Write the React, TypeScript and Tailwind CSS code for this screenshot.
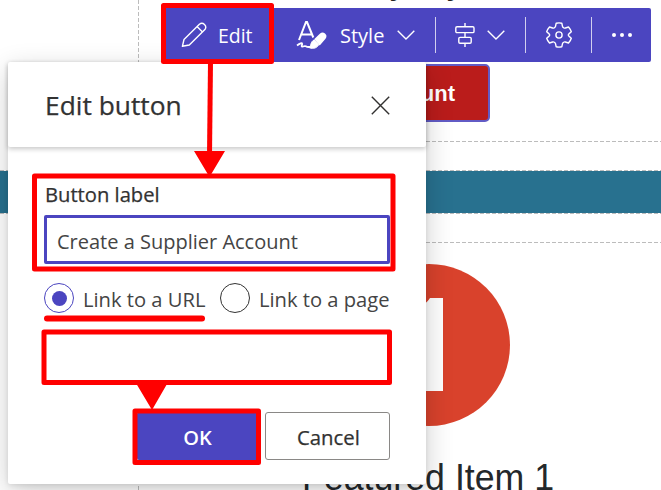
import React from "react";

const ui = "font-['Open_Sans','Noto_Sans',sans-serif]";

function Label({ children, width, className = "" }: { children: string; width: number; className?: string }) {
  const ref = React.useRef<HTMLSpanElement>(null);
  const [scale, setScale] = React.useState(1);
  React.useLayoutEffect(() => {
    if (ref.current) setScale(width / ref.current.offsetWidth);
  }, [width]);
  return (
    <span className="block shrink-0 whitespace-nowrap" style={{ width }}>
      <span ref={ref} className={`inline-block origin-left ${className}`} style={{ transform: `scaleX(${scale})` }}>
        {children}
      </span>
    </span>
  );
}

function Chevron() {
  return (
    <svg className="h-3 w-[18px] shrink-0" viewBox="0 0 18 12" fill="none" stroke="white" strokeWidth="1.4">
      <path d="M.7 1.7 9 9.9l8.3-8.2" />
    </svg>
  );
}

function Toolbar() {
  return (
    <div className={`absolute left-[163px] top-2 flex h-[54px] w-[488px] items-center rounded-[2px] bg-[#4b45c0] text-white ${ui}`}>
      <svg className="ml-[18px] h-[26px] w-[26px] shrink-0" viewBox="0 0 26 26" fill="none" stroke="white" strokeWidth="1.4" strokeLinejoin="round">
        <path d="M1.4 24.3 3 17.5 18.4 2.2a3.9 3.9 0 0 1 5.5 5.4L8.3 23Z M16 4.6l5.5 5.5" />
      </svg>
      <div className="ml-[11px] mt-[2px]"><Label width={35} className="text-[20px] leading-7">Edit</Label></div>
      <svg className="ml-[43px] h-[30px] w-8 shrink-0" viewBox="0 0 32 30" fill="none" stroke="white">
        <path d="M3 20 10 2h1l6.3 15.5M5.8 14.5h10.4" strokeWidth="2" />
        <path d="M1 25.5c3-2.300 5-3 5.200-1.800.2 1-1.500 3 .2 3s2-1.200 3.400-.4 1.800 1 4.500.6" strokeWidth="1.8" />
        <path d="m19.2 19.4 5.4-5.2c2.4-2.2 6.6.8 4.3 4l-5.2 6Z" fill="white" strokeWidth="1.6" />
        <path d="m18 20 4.8 4.600c-1.500 3.300-5.400 4.600-9.400 3.200 1.800-2.400 1-6 4.600-7.800Z" fill="white" strokeWidth="1" />
      </svg>
      <div className="ml-[12px] mt-[2px]"><Label width={44} className="text-[20px] leading-7">Style</Label></div>
      <div className="ml-[13px] flex"><Chevron /></div>
      <i className="ml-5 h-9 w-px shrink-0 bg-[#d1cfef]" />
      <svg className="ml-[19px] h-6 w-5 shrink-0" viewBox="0 0 20 24" fill="none" stroke="white" strokeWidth="1.4">
        <rect x=".8" y="3.8" width="18.2" height="5.8" rx="1.2" />
        <rect x="3.8" y="14.4" width="12.4" height="5.8" rx="1.2" />
        <path d="M10 0v3.8M10 9.6v4.8M10 20.2V24" />
      </svg>
      <div className="ml-3 flex"><Chevron /></div>
      <i className="ml-5 h-9 w-px shrink-0 bg-[#d1cfef]" />
      <svg className="ml-5 h-[26px] w-[26px] shrink-0" viewBox="0 0 26 26" fill="none" stroke="white" strokeWidth="1.4" strokeLinejoin="round">
        <path d="M10.2 1.2q2.8-.6 5.6 0l.7 3.2q.2 1 1.1 1.3.8.6 1.8.3l3.1-1q2 2.2 2.8 4.8l-2.4 2.1q-1.2 1.1 0 2.2l2.4 2.1q-.8 2.7-2.8 4.8l-3.1-1q-1-.3-1.8.3-.9.4-1.1 1.3l-.7 3.2q-2.8.6-5.6 0l-.7-3.2q-.2-1-1.1-1.3-.8-.6-1.8-.3l-3.1 1Q1.5 18.9.7 16.2l2.4-2.1q1.2-1.1 0-2.2L.7 9.8Q1.5 7.2 3.5 5l3.1 1q1 .3 1.8-.3.9-.4 1.1-1.3Z" />
        <circle cx="13" cy="13" r="3.1" />
      </svg>
      <i className="ml-[19px] h-9 w-px shrink-0 bg-[#d1cfef]" />
      <div className="ml-5 flex gap-1">
        <i className="size-1 rounded-full bg-white" />
        <i className="size-1 rounded-full bg-white" />
        <i className="size-1 rounded-full bg-white" />
      </div>
    </div>
  );
}

function PageCanvas() {
  return (
    <div className="absolute inset-0 font-['Liberation_Sans',Arial,sans-serif]">
      <svg className="absolute inset-0 h-full w-full" viewBox="0 0 661 490" fill="none">
        <path d="M138.5 0v490M138 141.5h523M0 170.5h661M0 213.5h661M138 242.5h523" stroke="#bcbcbc" strokeDasharray="4 2" />
        <path d="M0 171h661v42H0Z" fill="#28718f" />
        <circle cx="429" cy="345" r="81" fill="#d9422c" />
        <path d="M443 298v93h-24v-64h-16v-16q20-2 27-13Z" fill="white" />
      </svg>
      <div className="absolute left-[200px] top-[64px] flex h-[58px] w-[290px] items-center justify-end whitespace-nowrap rounded-[5px] border-2 border-[#625bc5] bg-[#ba1c1b] pr-[33px] text-[22px] font-bold text-white">
        Create a Supplier Account
      </div>
      <div className="absolute left-[302px] top-[457px]"><Label width={252} className="text-[36px] leading-[42px] text-[#24282b]">Featured Item 1</Label></div>
      <div className="absolute -top-[30px] left-[304px] text-[27px] font-bold leading-[32px] text-[#222]">Primary Key</div>
    </div>
  );
}

function Dialog() {
  return (
    <div className={`absolute left-2 top-[62px] flex h-[422px] w-[418px] flex-col rounded-[2px] bg-white text-[#323232] shadow-[0_8px_28px_rgba(0,0,0,.2),0_1px_5px_rgba(0,0,0,.1)] ${ui}`}>
      <header className="flex h-[85px] shrink-0 items-center justify-between rounded-[2px] pl-[37px] pr-9 shadow-[0_2px_5px_rgba(0,0,0,.22)]">
        <Label width={137} className="text-[25px] leading-9 [-webkit-text-stroke:.25px_#323232]">Edit button</Label>
        <svg className="mt-[2px] size-[19px]" viewBox="0 0 19 19" stroke="#323130" strokeWidth="1.4">
          <path d="m.8.8 17.4 17.4M18.2.8.8 18.2" />
        </svg>
      </header>
      <div className="flex flex-col px-9 pt-[34px]">
        <div className="pl-px"><Label width={115} className="text-[20px] leading-7 [-webkit-text-stroke:.25px_#323232]">Button label</Label></div>
        <div className="mt-[6px] flex h-[49px] w-[346px] items-center rounded-[2px] border-3 border-[#4b45c0] pl-[10px] pt-1 text-[#444]">
          <Label width={241} className="text-[20px] leading-7">Create a Supplier Account</Label>
        </div>
        <div className="mt-[19px] flex h-[30px] items-center text-[#444]">
          <i className="flex size-[30px] items-center justify-center rounded-full border border-[#4b45c0]">
            <b className="size-[15px] rounded-full bg-[#4b45c0]" />
          </i>
          <div className="ml-[9px] mt-[3px]"><Label width={122} className="text-[20px] leading-7">Link to a URL</Label></div>
          <i className="ml-[15px] size-[30px] rounded-full border border-[#333]" />
          <div className="ml-[9px] mt-[3px]"><Label width={131} className="text-[20px] leading-7">Link to a page</Label></div>
        </div>
        <div className="mt-[99px] flex h-12 gap-[7px] pl-[93px]">
          <button className="flex w-[121px] items-center justify-center rounded-[2px] bg-[#4b45c0] pt-1 text-white">
            <Label width={29} className="text-[20px] font-semibold leading-7">OK</Label>
          </button>
          <button className="flex w-[125px] items-center justify-center rounded-[3px] border border-[#8a8886] pt-1">
            <Label width={63} className="text-[20px] leading-7 [-webkit-text-stroke:.25px_#323232]">Cancel</Label>
          </button>
        </div>
      </div>
    </div>
  );
}

function Annotations() {
  return (
    <svg className="absolute inset-0 h-full w-full" viewBox="0 0 661 490" fill="none" stroke="red" strokeWidth="5" strokeLinejoin="round">
      <rect x="163.5" y="5.5" width="108" height="56" />
      <rect x="34.5" y="176" width="358.5" height="93" />
      <rect x="44" y="332" width="345.5" height="50.5" />
      <rect x="135" y="411" width="123.5" height="51.5" />
      <path d="M210.5 62 209.5 155" />
      <path d="M47 318.5h155" strokeWidth="6" strokeLinecap="round" />
      <path d="M194 151h31l-15.5 26Z M136.5 384H167L152 410Z" fill="red" stroke="none" />
    </svg>
  );
}

export default function App() {
  return (
    <main className="relative h-[490px] w-[661px] overflow-hidden bg-white">
      <PageCanvas />
      <Dialog />
      <Toolbar />
      <Annotations />
    </main>
  );
}
